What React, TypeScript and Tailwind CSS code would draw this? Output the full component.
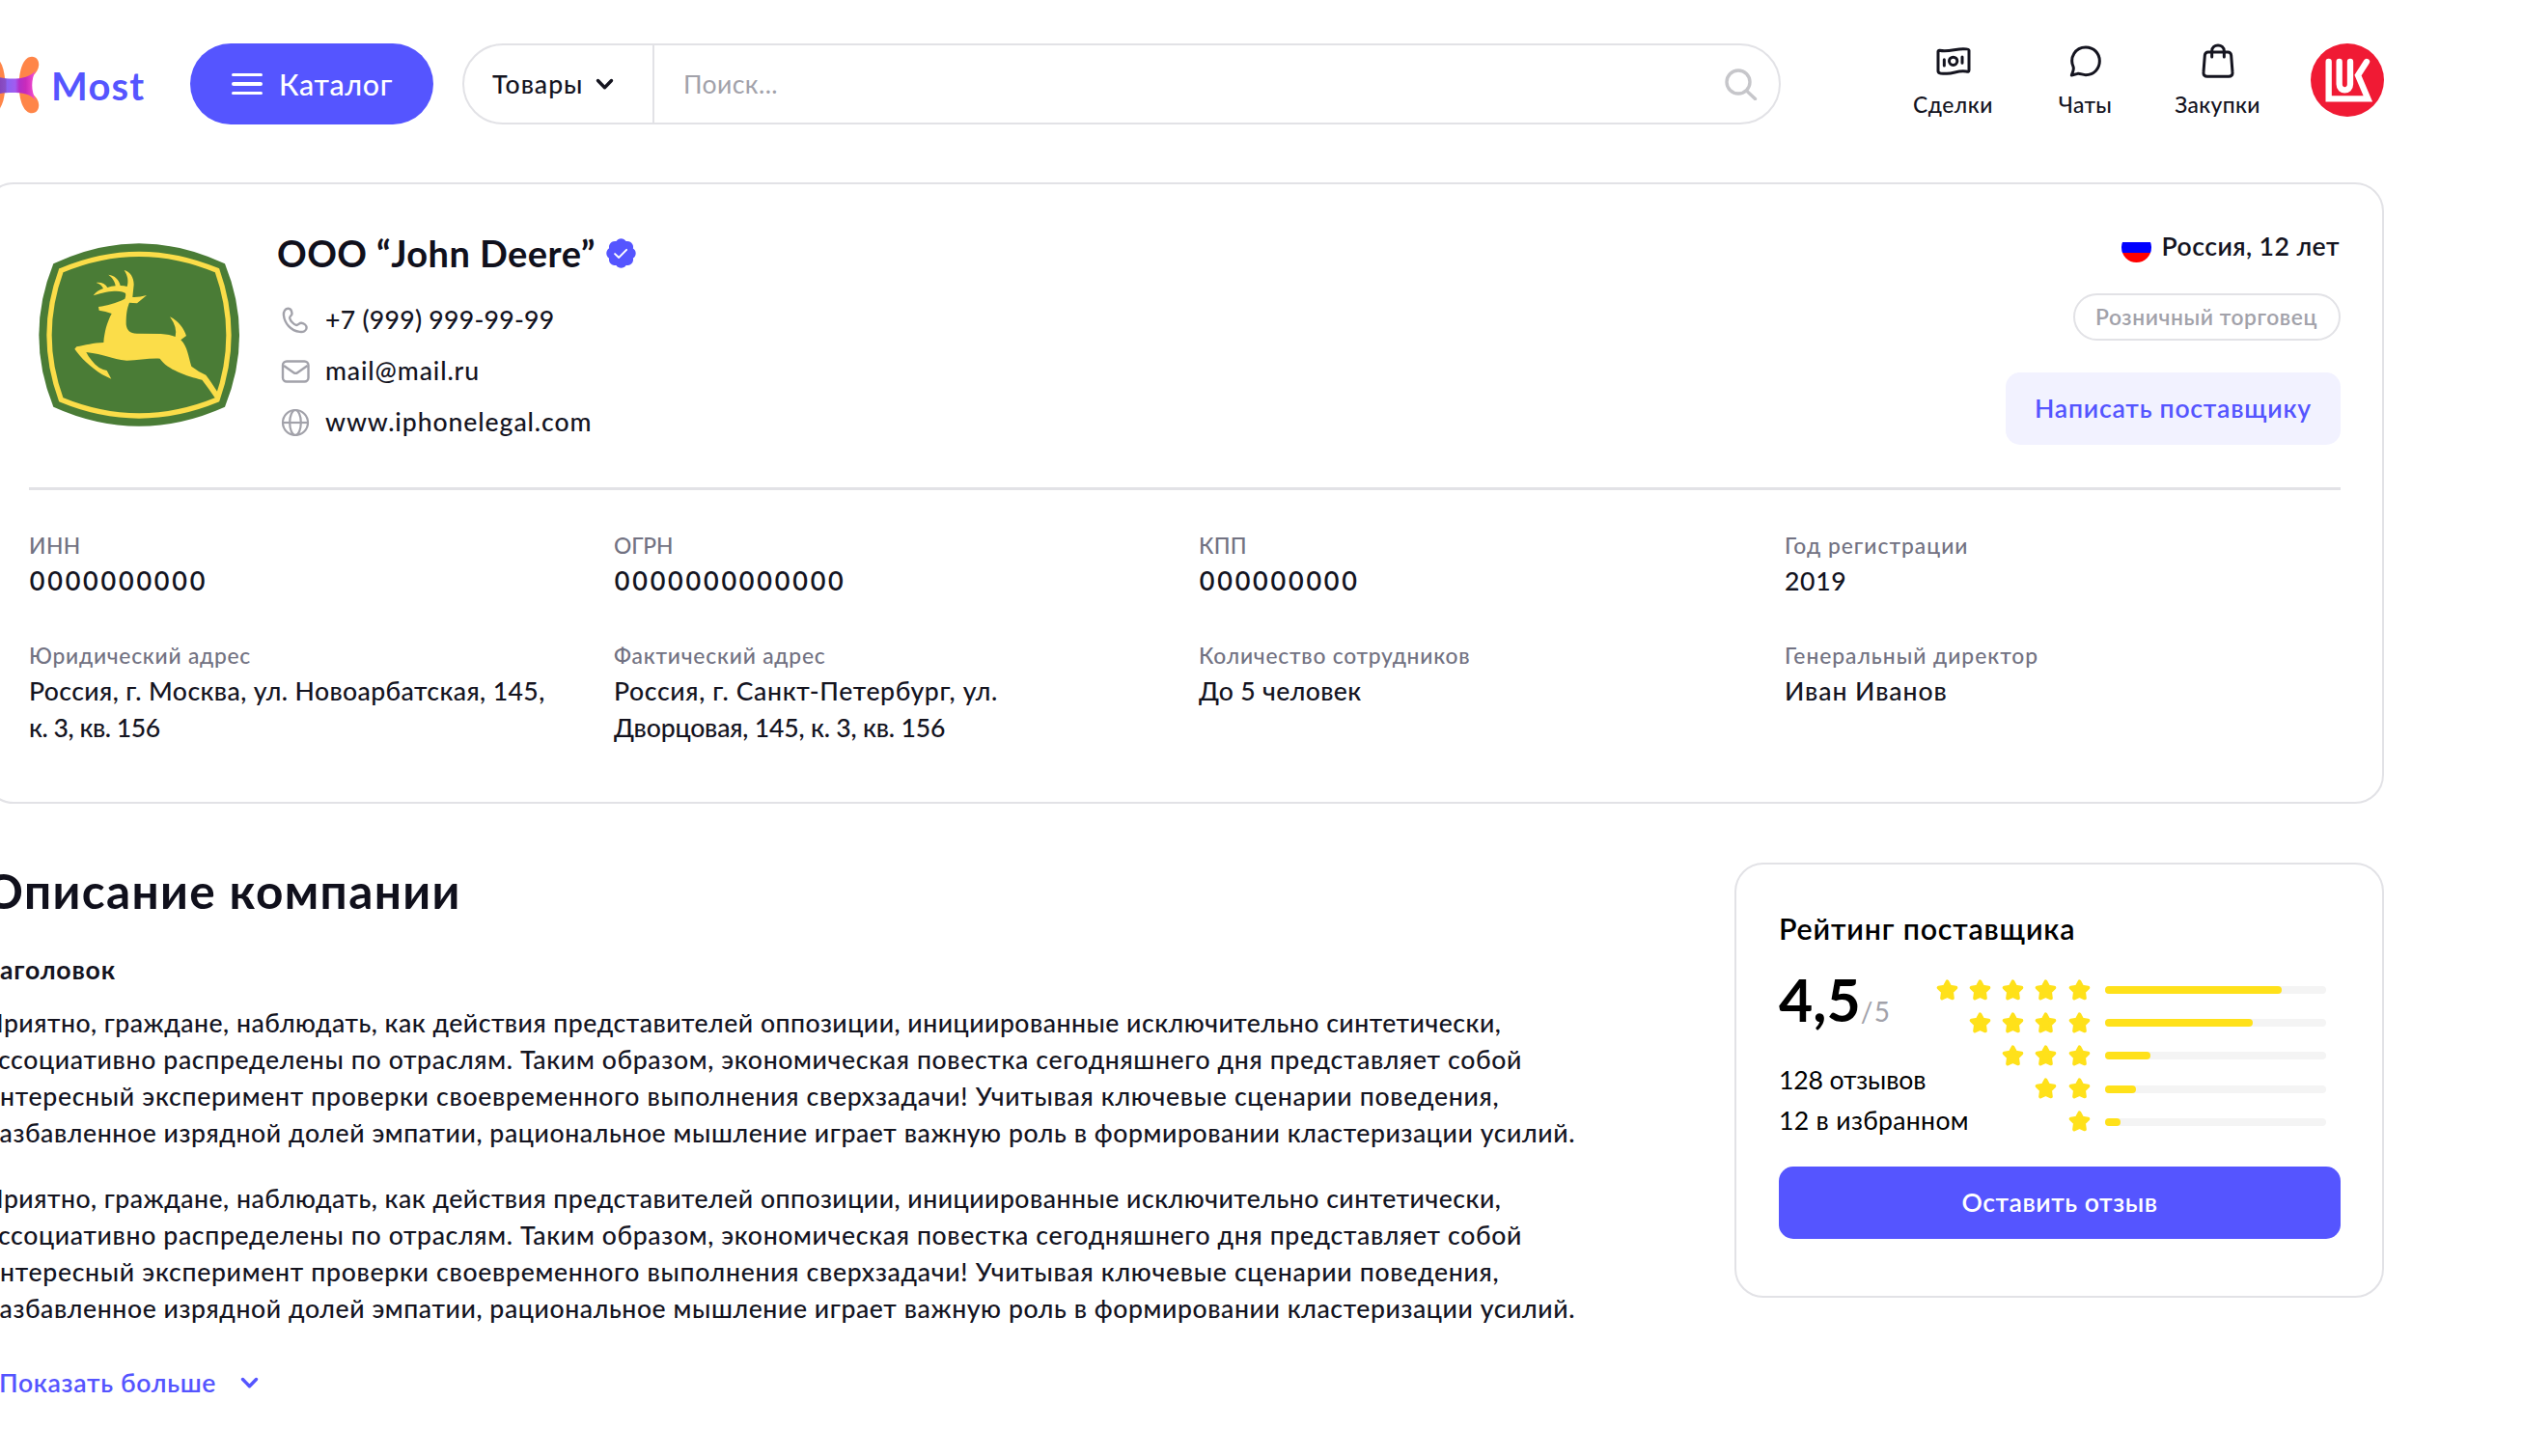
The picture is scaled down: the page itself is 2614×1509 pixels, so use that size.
import React from "react";

const PARAGRAPH = [
  { text: "Приятно, граждане, наблюдать, как действия представителей оппозиции, инициированные исключительно синтетически,", cls: "tracking-[0.0186em]" },
  { text: "ассоциативно распределены по отраслям. Таким образом, экономическая повестка сегодняшнего дня представляет собой", cls: "tracking-[0.0245em]" },
  { text: "интересный эксперимент проверки своевременного выполнения сверхзадачи! Учитывая ключевые сценарии поведения,", cls: "tracking-[0.0265em]" },
  { text: "разбавленное изрядной долей эмпатии, рациональное мышление играет важную роль в формировании кластеризации усилий.", cls: "tracking-[0.0221em]" },
];

type Line = { text: string; cls: string };
type Detail = { label: Line; value: Line[] };

const DETAILS: Detail[] = [
  { label: { text: "ИНН", cls: "tracking-[0.0197em]" }, value: [{ text: "0000000000", cls: "font-['Inter',sans-serif] tracking-[0.048em]" }] },
  { label: { text: "ОГРН", cls: "tracking-[-0.005em]" }, value: [{ text: "0000000000000", cls: "font-['Inter',sans-serif] tracking-[0.048em]" }] },
  { label: { text: "КПП", cls: "tracking-[0.0097em]" }, value: [{ text: "000000000", cls: "font-['Inter',sans-serif] tracking-[0.048em]" }] },
  { label: { text: "Год регистрации", cls: "tracking-[0.0447em]" }, value: [{ text: "2019", cls: "tracking-[0.0252em]" }] },
  {
    label: { text: "Юридический адрес", cls: "tracking-[0.0330em]" },
    value: [
      { text: "Россия, г. Москва, ул. Новоарбатская, 145,", cls: "tracking-[0.0150em]" },
      { text: "к. 3, кв. 156", cls: "tracking-[-0.0171em]" },
    ],
  },
  {
    label: { text: "Фактический адрес", cls: "tracking-[0.0352em]" },
    value: [
      { text: "Россия, г. Санкт-Петербург, ул.", cls: "tracking-[0.0240em]" },
      { text: "Дворцовая, 145, к. 3, кв. 156", cls: "tracking-[-0.0067em]" },
    ],
  },
  { label: { text: "Количество сотрудников", cls: "tracking-[0.0340em]" }, value: [{ text: "До 5 человек", cls: "tracking-[0.0135em]" }] },
  { label: { text: "Генеральный директор", cls: "tracking-[0.0430em]" }, value: [{ text: "Иван Иванов", cls: "tracking-[0.0350em]" }] },
];

const RATINGS = [
  { stars: 5, width: 183 },
  { stars: 4, width: 153 },
  { stars: 3, width: 47 },
  { stars: 2, width: 32 },
  { stars: 1, width: 16 },
];

function Logo() {
  return (
    <svg className="mt-[13px] h-[60px] w-[57px] shrink-0" viewBox="0 0 57 60" fill="none">
      <defs>
        <linearGradient id="bridge" x1="0" y1="0" x2="57" y2="0" gradientUnits="userSpaceOnUse">
          <stop offset="0.05" stopColor="#f04bd0" />
          <stop offset="0.25" stopColor="#8443b8" />
          <stop offset="0.38" stopColor="#8a50c8" />
          <stop offset="0.41" stopColor="#8b63f2" />
          <stop offset="0.56" stopColor="#a25cf0" />
          <stop offset="0.63" stopColor="#b42fc8" />
          <stop offset="0.75" stopColor="#c92bbb" />
          <stop offset="0.92" stopColor="#f650d2" />
        </linearGradient>
      </defs>
      <g fill="#ff8548">
        <path d="M36 23C37 12 41 .7 49 .7c5 0 7.500 4.300 7.200 9C55.500 18 47 23.500 36 30.500Z" />
        <path d="M36 37C37 48 41 59.300 49 59.300c5 0 7.500-4.300 7.200-9C55.500 42 47 36.500 36 29.500Z" />
        <path d="M21 23C20 12 16 .7 8 .7 3 .7.500 5 .800 9.700 1.500 18 10 23.500 21 30.500Z" />
        <path d="M21 37C20 48 16 59.300 8 59.300c-5 0-7.500-4.300-7.200-9C1.500 42 10 36.500 21 29.500Z" />
      </g>
      <path d="M4 15c5 6.500 14 8.600 24.500 8.600S48 21.500 53 15c-5 10-5 20.500 0 31-5-6.500-14-8-24.500-8S9 39.500 4 46c5-10.500 5-21 0-31Z" fill="url(#bridge)" />
    </svg>
  );
}

function Chevron() {
  return (
    <svg className="h-[13px] w-[19px] shrink-0" viewBox="0 0 19 13" fill="none" stroke="currentColor" strokeWidth="3.4" strokeLinecap="round" strokeLinejoin="round">
      <path d="M2.500 2.500 9.500 9.700l7-7.200" />
    </svg>
  );
}

function MoneyIcon() {
  return (
    <svg className="h-[29px] w-[36px]" viewBox="0 0 108 87" fill="none" stroke="currentColor" strokeWidth="9" strokeLinecap="round" strokeLinejoin="round">
      <path d="M6 13q0-4 5-3c26 6 48-5 74-5 9 0 17 0 17 5v61c0 6-4 5-9 4-24-4-36 6-60 7-14 0-27 0-27-8Z" />
      <circle cx="53" cy="43" r="12.500" />
      <path d="M25 38v19M81 30v19" />
    </svg>
  );
}

function ChatIcon() {
  return (
    <svg className="h-[33px] w-[33px]" viewBox="0 0 99 99" fill="none" stroke="currentColor" strokeWidth="9" strokeLinejoin="round">
      <path d="M12 66C0 38 18 6 51 6c25 0 43 19 43 43S76 92 51 92c-10 0-17-5-25-4L7 93c2-9 9-17 5-27Z" />
    </svg>
  );
}

function BagIcon() {
  return (
    <svg className="h-[36px] w-[34px]" viewBox="0 0 102 108" fill="none" stroke="currentColor" strokeWidth="9" strokeLinecap="round" strokeLinejoin="round">
      <path d="M20 27h62c6 0 9 4 10 10l4 52c1 9-4 14-12 14H18c-8 0-13-5-12-14l4-52c1-6 4-10 10-10Z" />
      <path d="M32 42V24c0-24 38-24 38 0v18" />
    </svg>
  );
}

function LukoilAvatar() {
  return (
    <svg className="h-[76px] w-[76px] shrink-0" viewBox="0 0 228 228" fill="none">
      <circle cx="114" cy="114" r="114" fill="#f01a34" />
      <g stroke="#fff" strokeWidth="19" strokeLinecap="round">
        <path d="M56 57V172H178L147 99 174 57" strokeLinejoin="miter" />
        <path d="M89 57v70c0 24 34 24 34 0V57" />
      </g>
    </svg>
  );
}

function DeerLogo() {
  return (
    <svg className="mt-[14px] h-[190px] w-[208px] shrink-0" viewBox="120 38 624 568">
      <path d="M166 101Q432-25 699 101 789 323 699 546 432 666 166 546 76 323 166 101Z" fill="#4a7c36" />
      <path d="M190 122Q432 20 675 122 747 323 675 524 432 624 190 524 116 323 190 122Z" fill="none" stroke="#fbdd49" strokeWidth="16" />
      <path
        fill="#fbdd49"
        d="M306 235C335 230 360 224 388 210C391 203 391 197 390 193C382 184 345 181 290 200C298 189 308 182 321 178C317 169 310 163 299 160C314 158 328 164 334 175Q346 170 359 170C357 154 348 144 337 135C357 138 370 150 374 169Q386 169 395 172C400 156 397 138 386 121C405 126 416 144 416 166L412 205Q432 206 456 199L426 224L402 222C395 240 392 255 392 290C394 308 404 318 425 318L500 319Q528 321 545 328Q552 299 528 266C556 280 571 302 579 325L562 338C584 360 585 390 595 420Q614 435 640 447C654 465 665 483 677 501L670 521Q650 490 628 462C580 450 520 430 497 396C465 394 428 402 394 402C345 398 325 382 268 376C276 392 290 411 308 424Q322 432 332 433L346 459L318 446C280 421 252 395 232 366L238 359C265 354 290 347 322 346C325 312 332 285 347 256Q328 248 308 246Z"
      />
    </svg>
  );
}

function VerifiedBadge() {
  return (
    <svg className="h-[31px] w-[31px] shrink-0" viewBox="1.800 1.800 20.400 20.400">
      <path fill="#5555ff" d="M3.850 8.620a4 4 0 0 1 4.780-4.770 4 4 0 0 1 6.740 0 4 4 0 0 1 4.780 4.780 4 4 0 0 1 0 6.740 4 4 0 0 1-4.770 4.780 4 4 0 0 1-6.750 0 4 4 0 0 1-4.780-4.770 4 4 0 0 1 0-6.760Z" />
      <path d="m7.800 12.400 2.700 2.500 5.200-5.300" fill="none" stroke="#fff" strokeWidth="1.300" strokeLinecap="round" strokeLinejoin="round" />
    </svg>
  );
}

const contactIcon = "h-[30px] w-[30px] shrink-0 text-[#a2a2aa]";

function PhoneIcon() {
  return (
    <svg className={contactIcon} viewBox="-1.500 -1.500 30 30" fill="none" stroke="currentColor" strokeWidth="2.400" strokeLinejoin="round">
      <path d="M6.200 1.200C3 1.200 1.200 4 1.400 8 2.300 17 9 24.300 18 25.400c4 .5 6.800-1 7.100-3.900.2-2.600-2.300-4.800-5.400-5.200-2.200-.2-3 2.200-5 2.200C12 18.200 8.300 14 7.700 11.200 7.400 9 10.200 8.600 10 6.300 9.700 3.500 8.300 1.200 6.200 1.200Z" />
    </svg>
  );
}

function MailIcon() {
  return (
    <svg className={contactIcon} viewBox="0 0 30 30" fill="none" stroke="currentColor" strokeWidth="2.400" strokeLinejoin="round">
      <rect x="2" y="4.500" width="26.500" height="21" rx="4" />
      <path d="m3 9 10.300 7.200c1.300.9 2.600.9 3.900 0L27.500 9" />
    </svg>
  );
}

function GlobeIcon() {
  return (
    <svg className={contactIcon} viewBox="0 0 30 30" fill="none" stroke="currentColor" strokeWidth="2.200">
      <circle cx="15" cy="15" r="13" />
      <ellipse cx="15" cy="15" rx="5.800" ry="13" />
      <path d="M2 15h26" />
    </svg>
  );
}

function Star() {
  return (
    <svg className="h-[23px] w-[23px]" viewBox="0 0 22 22">
      <path
        d="M11 2.200 13.700 7.200l5.800 1-4.100 4.200.8 6.200L11 16.300 5.800 18.600l.8-6.200L2.500 8.200l5.800-1Z"
        fill="#ffe11a"
        stroke="#ffe11a"
        strokeWidth="3.600"
        strokeLinejoin="round"
      />
    </svg>
  );
}

function NavItem({ icon, label, cls }: { icon: React.ReactNode; label: string; cls: string }) {
  return (
    <div className="flex w-[137px] flex-col items-center">
      <div className="flex h-[36px] items-center justify-center">{icon}</div>
      <div className={`mt-[13px] text-[22.8px] leading-[28px] font-medium ${cls}`}>{label}</div>
    </div>
  );
}

function Header() {
  return (
    <header className="flex h-[189px] items-start pt-[45px]">
      <Logo />
      <div className="mt-[19px] ml-[12px] w-[144px] shrink-0 text-[40px] leading-[50px] font-bold tracking-[0.03em] text-[#5555ff]">Most</div>
      <button className="flex h-[84px] w-[252px] shrink-0 items-center rounded-full bg-[#5555ff] pl-[43px] text-white">
        <span className="flex w-[32px] flex-col gap-[6px]">
          <span className="h-[3.5px] rounded-full bg-white" />
          <span className="h-[3.5px] rounded-full bg-white" />
          <span className="h-[3.5px] rounded-full bg-white" />
        </span>
        <span className="ml-[17px] text-[30.4px] leading-[40px] font-medium tracking-[0.0213em]">Каталог</span>
      </button>
      <div className="ml-[30px] flex h-[84px] w-[1366px] shrink-0 items-center rounded-full border-2 border-[#e2e2e6]">
        <div className="flex h-full w-[197px] shrink-0 items-center justify-between border-r-2 border-[#e2e2e6] pr-[40px] pl-[29px]">
          <span className="text-[26.6px] leading-[38px] font-medium tracking-[0.0370em]">Товары</span>
          <Chevron />
        </div>
        <span className="grow pl-[30px] text-[26.6px] leading-[38px] tracking-[0.0150em] text-[#a2a2aa]">Поиск...</span>
        <svg className="mr-[22px] h-[34px] w-[34px]" viewBox="0 0 34 34" fill="none" stroke="#c6c6ca" strokeWidth="3.400" strokeLinecap="round">
          <circle cx="14" cy="15" r="12" />
          <path d="m23 24.500 8.500 8" />
        </svg>
      </div>
      <nav className="ml-[110px] flex shrink-0">
        <NavItem icon={<MoneyIcon />} label="Сделки" cls="tracking-[0.0253em]" />
        <NavItem icon={<ChatIcon />} label="Чаты" cls="tracking-[0.0143em]" />
        <NavItem icon={<BagIcon />} label="Закупки" cls="tracking-[0.0150em]" />
      </nav>
      <div className="ml-auto">
        <LukoilAvatar />
      </div>
    </header>
  );
}

function CompanyCard() {
  return (
    <section className="h-[644px] rounded-[30px] border-2 border-[#e2e2e6] pr-[43px] pl-[44px]">
      <div className="flex h-[314px] pt-[47px]">
        <div className="ml-[10px]">
          <DeerLogo />
        </div>
        <div className="ml-[39px]">
          <div className="flex items-center gap-[11px]">
            <h1 className="text-[38px] leading-[48px] font-bold tracking-[0.0115em] text-[#10101c]">ООО “John Deere”</h1>
            <VerifiedBadge />
          </div>
          <ul className="mt-[19px] text-[26.6px] leading-[53px] font-medium">
            <li className="flex items-center gap-[16px] pl-[4px]">
              <PhoneIcon />
              <span className="tracking-[0.0102em]">+7 (999) 999-99-99</span>
            </li>
            <li className="flex items-center gap-[16px] pl-[4px]">
              <MailIcon />
              <span className="tracking-[0.0330em]">mail@mail.ru</span>
            </li>
            <li className="flex items-center gap-[16px] pl-[4px]">
              <GlobeIcon />
              <span className="tracking-[0.0346em]">www.iphonelegal.com</span>
            </li>
          </ul>
        </div>
        <div className="ml-auto flex flex-col items-end">
          <div className="flex items-center gap-[11px] pr-[1px]">
            <span className="flex h-[31px] w-[31px] flex-col overflow-hidden rounded-full">
              <span className="h-[10px] bg-white" />
              <span className="h-[11px] bg-[#0000ff]" />
              <span className="h-[10px] bg-[#ff0000]" />
            </span>
            <span className="-mt-[1px] mb-[1px] text-[26.6px] leading-[36px] font-semibold tracking-[0.0165em]">Россия, 12 лет</span>
          </div>
          <div className="mt-[30px] flex h-[49px] w-[277px] items-center justify-center rounded-full border-2 border-[#e2e2e6] pr-[1px] text-[22.8px] font-semibold tracking-[0.0254em] text-[#a2a2aa]">
            Розничный торговец
          </div>
          <button className="mt-[33px] h-[75px] w-[347px] rounded-[15px] bg-[#f2f2ff] text-[26.6px] font-semibold tracking-[0.0284em] text-[#5555ff]">
            Написать поставщику
          </button>
        </div>
      </div>
      <div className="h-[3px] bg-[#e2e2e6]" />
      <dl className="mt-[39px] grid grid-cols-[606px_606px_607px_auto] gap-y-[40px] font-medium">
        {DETAILS.map((d) => (
          <div key={d.label.text}>
            <dt className={`text-[22.8px] leading-[36px] text-[#727282] ${d.label.cls}`}>{d.label.text}</dt>
            {d.value.map((v) => (
              <dd key={v.text} className={`text-[26.6px] leading-[38px] whitespace-nowrap ${v.cls}`}>
                {v.text}
              </dd>
            ))}
          </div>
        ))}
      </dl>
    </section>
  );
}

function Description() {
  return (
    <section className="w-[1750px]">
      <h2 className="text-[49.5px] leading-[58px] font-bold tracking-[0.028em] text-[#10101c]">Описание компании</h2>
      <h3 className="mt-[34px] text-[26.6px] leading-[38px] font-bold tracking-[0.030em]">Заголовок</h3>
      {[0, 1].map((i) => (
        <div key={i} className={i === 0 ? "mt-[17px]" : "mt-[30px]"}>
          {PARAGRAPH.map((l) => (
            <div key={l.text} className={`text-[26.6px] leading-[38px] font-medium whitespace-nowrap ${l.cls}`}>
              {l.text}
            </div>
          ))}
        </div>
      ))}
      <button className="mt-[39px] ml-[15px] flex items-center text-[#5555ff]">
        <span className="text-[26.6px] leading-[38px] font-semibold tracking-[0.025em]">Показать больше</span>
        <span className="ml-[25px]">
          <Chevron />
        </span>
      </button>
    </section>
  );
}

function RatingCard() {
  return (
    <aside className="ml-auto h-[451px] w-[673px] rounded-[30px] border-2 border-[#e2e2e6] pr-[43px] pl-[44px] text-black">
      <h2 className="mt-[46px] text-[30.4px] leading-[40px] font-semibold tracking-[0.0270em]">Рейтинг поставщика</h2>
      <div className="mt-[26px] flex h-[201px] justify-between">
        <div className="w-[150px] whitespace-nowrap">
          <div className="-mt-[7px] flex items-baseline">
            <span className="text-[60.8px] leading-[70px] font-bold">4,5</span>
            <span className="text-[28px] tracking-[0.05em] text-[#a2a2aa]">/5</span>
          </div>
          <div className="mt-[27px] text-[26.6px] leading-[42px]">
            <div className="tracking-[-0.0048em]">128 отзывов</div>
            <div className="tracking-[0.0121em]">12 в избранном</div>
          </div>
        </div>
        <div className="mt-[1px] mr-[15px] flex flex-col">
          {RATINGS.map((r) => (
            <div key={r.stars} className="flex h-[34.2px] items-center justify-end">
              <div className="mr-[15.5px] flex gap-[11.2px]">
                {Array.from({ length: r.stars }, (_, i) => (
                  <Star key={i} />
                ))}
              </div>
              <div className="h-[8px] w-[229px] rounded-full bg-[#f4f4f4]">
                <div className="h-full rounded-full bg-[#ffe11a]" style={{ width: r.width }} />
              </div>
            </div>
          ))}
        </div>
      </div>
      <button className="h-[75px] w-full rounded-[15px] bg-[#5555ff] text-[26.6px] font-semibold tracking-[0.02em] text-white">Оставить отзыв</button>
    </aside>
  );
}

export default function App() {
  return (
    <div className="h-[1509px] w-[2614px] overflow-hidden bg-white font-['Lato',sans-serif] text-[#14141f]">
      <div className="-ml-[16px] w-[2486px]">
        <Header />
        <CompanyCard />
        <div className="mt-[61px] flex items-start">
          <Description />
          <RatingCard />
        </div>
      </div>
    </div>
  );
}
